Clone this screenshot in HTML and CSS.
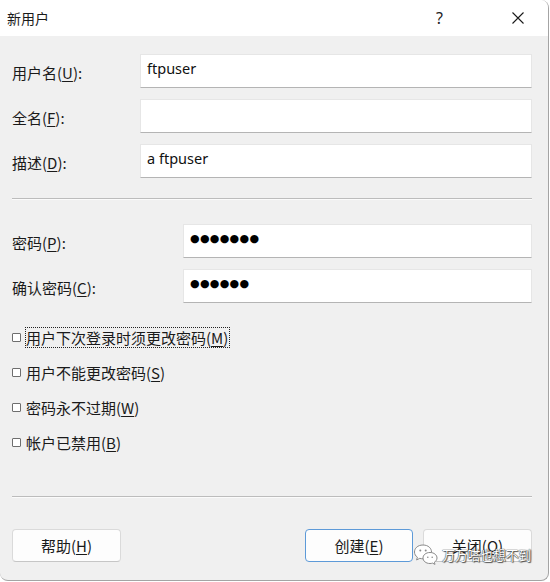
FILE: index.html
```html
<!DOCTYPE html>
<html lang="zh-CN">
<head>
    <meta charset="UTF-8">
    <title>新用户</title>
    <link rel="stylesheet" href="styles.css">
</head>
<body>
    <div class="window">
        <div class="titlebar">
            <span class="title">新用户</span>
            <span class="help-btn">?</span>
            <span class="close-btn">
                <svg width="12" height="12" viewBox="0 0 12 12"><path d="M0.5 0.5 L11.5 11.5 M11.5 0.5 L0.5 11.5" stroke="#1a1a1a" stroke-width="1.1" fill="none"/></svg>
            </span>
        </div>

        <div class="content">
            <div class="rows names">
                <label class="lbl">用户名(<u>U</u>):</label>
                <div class="field">ftpuser</div>
                <label class="lbl">全名(<u>F</u>):</label>
                <div class="field"></div>
                <label class="lbl">描述(<u>D</u>):</label>
                <div class="field">a ftpuser</div>
            </div>

            <div class="sep first"></div>

            <div class="rows passwords">
                <label class="lbl">密码(<u>P</u>):</label>
                <div class="field dots">●●●●●●●</div>
                <label class="lbl">确认密码(<u>C</u>):</label>
                <div class="field dots">●●●●●●</div>
            </div>

            <ul class="options">
                <li><span class="box"></span><span class="opt focus">用户下次登录时须更改密码(<u>M</u>)</span></li>
                <li><span class="box"></span><span class="opt">用户不能更改密码(<u>S</u>)</span></li>
                <li><span class="box"></span><span class="opt">密码永不过期(<u>W</u>)</span></li>
                <li><span class="box"></span><span class="opt">帐户已禁用(<u>B</u>)</span></li>
            </ul>

            <div class="sep second"></div>

            <div class="buttons">
                <button class="btn">帮助(<u>H</u>)</button>
                <span class="spacer"></span>
                <button class="btn default">创建(<u>E</u>)</button>
                <button class="btn">关闭(<u>O</u>)</button>
            </div>
        </div>

        <div class="watermark">
            <svg width="26" height="22" viewBox="0 0 26 22">
                <path d="M10 2 C4.5 2 1.5 5.5 1.5 9 C1.5 11.2 2.6 13 4.4 14.2 L3.6 17 L6.8 15.3 C7.8 15.6 8.9 15.8 10 15.8 C15.5 15.8 18.5 12.5 18.5 9 C18.5 5.5 15.5 2 10 2 Z" fill="#fff" stroke="#8a8a8a" stroke-width="1"/>
                <path d="M17 9.5 C12.6 9.5 10 12.2 10 15 C10 17.8 12.6 20.5 17 20.5 C17.9 20.5 18.7 20.4 19.5 20.1 L22 21.4 L21.4 19.2 C23 18.2 24 16.7 24 15 C24 12.2 21.4 9.5 17 9.5 Z" fill="#fff" stroke="#8a8a8a" stroke-width="1"/>
                <circle cx="7.3" cy="7.6" r="1" fill="#8a8a8a"/>
                <circle cx="12.7" cy="7.6" r="1" fill="#8a8a8a"/>
                <circle cx="14.8" cy="14.2" r="0.8" fill="#8a8a8a"/>
                <circle cx="19.2" cy="14.2" r="0.8" fill="#8a8a8a"/>
            </svg>
            <span class="wm-text">万万嗒也想不到</span>
        </div>
    </div>
</body>
</html>
```

FILE: styles.css
```css
body {
    margin: 0;
    background: #fff;
    font-family: "Noto Sans CJK SC", "Noto Sans", sans-serif;
    color: #1a1a1a;
}
u {
    text-decoration-thickness: 1px;
    text-underline-offset: 2px;
}
.window {
    position: relative;
    width: 548px;
    height: 580px;
    background: #f0f0f0;
    border-right: 1px solid #a4a4a4;
    border-bottom: 1px solid #a4a4a4;
    border-radius: 0 8px 8px 8px;
    overflow: hidden;
}
.titlebar {
    height: 36px;
    background: #fff;
    display: flex;
    align-items: center;
    font-size: 14px;
}
.title {
    margin-left: 7px;
    flex: 1;
}
.help-btn {
    width: 10px;
    margin-right: 66px;
    font-family: "Noto Sans", sans-serif;
    font-size: 16px;
    color: #222;
}
.close-btn {
    display: flex;
    margin-right: 24px;
}
.content {
    padding: 18px 16px 0 12px;
}
.rows {
    display: grid;
    row-gap: 11px;
    align-items: center;
}
.names {
    grid-template-columns: 128px 1fr;
}
.passwords {
    grid-template-columns: 171px 1fr;
}
.lbl {
    font-size: 15px;
    padding-top: 3px;
}
.field {
    height: 34px;
    box-sizing: border-box;
    background: #fff;
    border: 1px solid #e6e6e6;
    border-bottom-color: #b4b4b4;
    padding: 3px 6px;
    line-height: 20px;
    font-family: "Noto Sans", "Noto Sans CJK SC", sans-serif;
    font-size: 14.5px;
    color: #111;
}
.dots {
    font-family: "DejaVu Sans", sans-serif;
    font-size: 11px;
    letter-spacing: 0.3px;
    line-height: 22px;
    color: #000;
}
.sep {
    height: 1px;
    background: #bcbcbc;
    border-bottom: 1px solid #fbfbfb;
}
.sep.first {
    margin: 20px 0 24px;
}
.sep.second {
    margin: 36px 0 31px;
}
.options {
    list-style: none;
    margin: 17px 0 0;
    padding: 0;
}
.options li {
    height: 35px;
    display: flex;
    align-items: center;
    font-size: 15px;
}
.box {
    width: 7px;
    height: 7px;
    border: 1px solid #6e6e6e;
    border-radius: 1px;
    background: #fff;
    margin-right: 4px;
}
.opt {
    border: 1px solid transparent;
    padding: 0 1px 0 0;
    line-height: 19px;
}
.opt.focus {
    border: 1px dotted #222;
}
.buttons {
    display: flex;
    gap: 10px;
}
.spacer {
    flex: 1;
}
.btn {
    width: 109px;
    height: 33px;
    background: #fdfdfd;
    border: 1px solid #dadada;
    border-bottom-color: #c6c6c6;
    border-radius: 4px;
    font-family: "Noto Sans CJK SC", "Noto Sans", sans-serif;
    font-size: 15px;
    color: #1a1a1a;
    padding: 0;
}
.btn.default {
    width: 108px;
    border-color: #5d9ad8;
}
.watermark {
    position: absolute;
    left: 413px;
    top: 543px;
    display: flex;
    align-items: center;
    gap: 3px;
}
.wm-text {
    color: #fff;
    font-size: 13px;
    letter-spacing: -0.3px;
    text-shadow: 0 0 1px #333, 0 0 1px #333, 1px 1px 1px #555;
}
```
